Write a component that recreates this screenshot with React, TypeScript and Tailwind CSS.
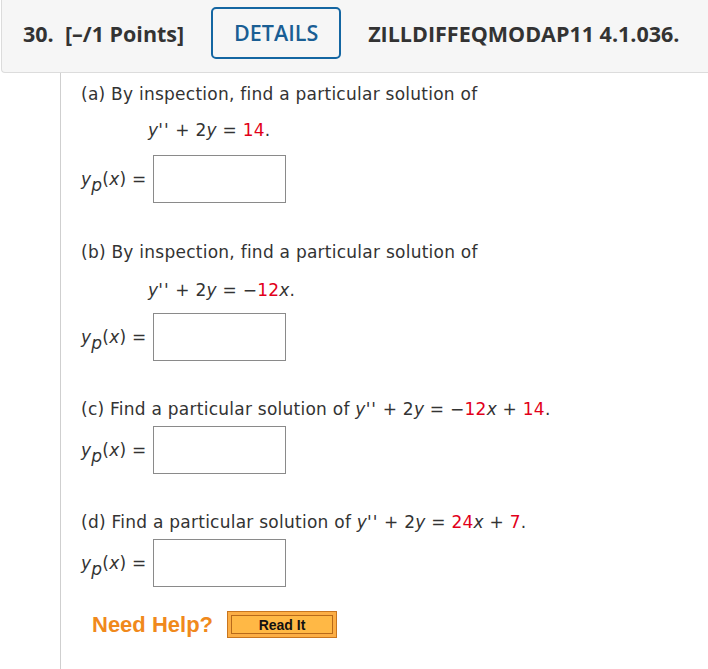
import React from "react";

function Red({ children }: { children: React.ReactNode }) {
  return <span className="text-[#e2001a]">{children}</span>;
}

function Prime() {
  return <i className="tracking-[1px]">''</i>;
}

function Label() {
  return (
    <span className="whitespace-nowrap">
      <i>y</i>
      <span className="italic relative top-[6px]">p</span>(<i>x</i>) =
    </span>
  );
}

function AnswerRow() {
  return (
    <div className="flex items-center">
      <div className="w-[72px]">
        <Label />
      </div>
      <div className="w-[133px] h-[48px] border border-[#8a8a8a] bg-white" />
    </div>
  );
}

export default function App() {
  return (
    <div className="w-[708px] h-[669px] bg-white text-[#333] overflow-hidden">
      <div className="h-[73px] ml-[1px] flex items-start bg-[#f6f6f6] border-b border-l border-[#dcdcdc] rounded-bl-[4px] font-['Open_Sans',sans-serif]">
        <span className="ml-[21px] mt-[18px] text-[21.5px] font-bold text-[#333]">30.&nbsp; [–/1 Points]</span>
        <div className="ml-[27px] mt-[7px] w-[130px] h-[52px] border-2 border-[#1466a2] rounded-[5px] flex items-center justify-center text-[21.5px] font-semibold text-[#1a5e94]">
          DETAILS
        </div>
        <span className="ml-[27px] mt-[18px] text-[21.5px] font-bold text-[#333]">ZILLDIFFEQMODAP11 4.1.036.</span>
      </div>
      <div className="ml-[60px] border-l border-[#cfcfcf] pl-[20px] h-[596px] text-[17px] leading-[22px] tracking-[0.25px] font-['DejaVu_Sans',Verdana,sans-serif]">
        <div className="pt-[10px]">(a) By inspection, find a particular solution of</div>
        <div className="mt-[14px] pl-[67px]">
          <i>y</i><Prime /> + 2<i>y</i> = <Red>14</Red>.
        </div>
        <div className="mt-[14px]">
          <AnswerRow />
        </div>
        <div className="mt-[38px]">(b) By inspection, find a particular solution of</div>
        <div className="mt-[16px] pl-[67px]">
          <i>y</i><Prime /> + 2<i>y</i> = −<Red>12</Red><i>x</i>.
        </div>
        <div className="mt-[12px]">
          <AnswerRow />
        </div>
        <div className="mt-[37px]">
          (c) Find a particular solution of <i>y</i><Prime /> + 2<i>y</i> = −<Red>12</Red><i>x</i> + <Red>14</Red>.
        </div>
        <div className="mt-[6px]">
          <AnswerRow />
        </div>
        <div className="mt-[37px]">
          (d) Find a particular solution of <i>y</i><Prime /> + 2<i>y</i> = <Red>24</Red><i>x</i> + <Red>7</Red>.
        </div>
        <div className="mt-[6px]">
          <AnswerRow />
        </div>
        <div className="mt-[24px] ml-[11px] flex items-center font-['Liberation_Sans',Arial,sans-serif] tracking-normal">
          <span className="text-[22px] font-bold text-[#f0891c] leading-[26px]">Need Help?</span>
          <div className="ml-[14px] w-[110px] h-[27px] border border-[#c9761f] bg-[#fcae45] p-[3px]">
            <div className="w-full h-full border border-[#b86a1a] bg-[#ffb845] flex items-center justify-center text-[14px] font-bold text-[#111]">
              Read It
            </div>
          </div>
        </div>
      </div>
    </div>
  );
}
